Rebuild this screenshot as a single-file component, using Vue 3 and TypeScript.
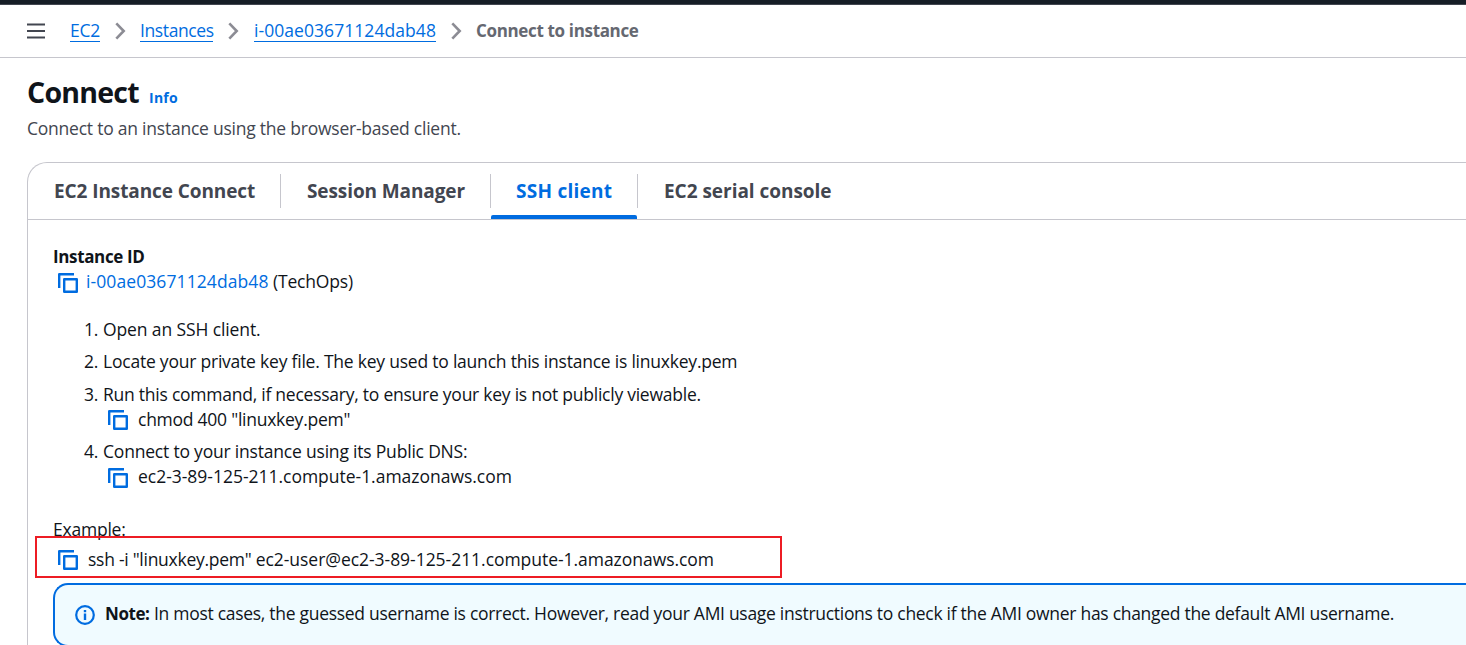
<script setup lang="ts">
import { h, type FunctionalComponent } from 'vue'

interface Tab {
  label: string
  key: string
  active?: boolean
}

const instanceId = 'i-00ae03671124dab48'
const dns = 'ec2-3-89-125-211.compute-1.amazonaws.com'

const tabs: Tab[] = [
  { label: 'EC2 Instance Connect', key: 'eic' },
  { label: 'Session Manager', key: 'ssm' },
  { label: 'SSH client', key: 'ssh', active: true },
  { label: 'EC2 serial console', key: 'serial' },
]

const stroke = (width: string) => ({ fill: 'none', stroke: 'currentColor', 'stroke-width': width })

const CopyIcon: FunctionalComponent = () =>
  h('svg', { width: 20, height: 20, viewBox: '0 0 20 20', ...stroke('2.4'), 'stroke-linejoin': 'round' }, [
    h('path', { d: 'M16 1.200H1.200V15' }),
    h('path', { d: 'M6.200 6.200h12.600v12.600H6.200z' }),
  ])

const Chevron: FunctionalComponent = () =>
  h('svg', { width: 12, height: 18, viewBox: '0 0 12 18', ...stroke('2.6') }, [
    h('path', { d: 'M1.300 1.400 8.700 9l-7.400 7.600' }),
  ])
</script>

<template>
  <div class="page">
    <div class="topbar"></div>
    <nav class="crumbs">
      <svg class="menu" width="18" height="16" viewBox="0 0 18 16">
        <path d="M0 1.500h18M0 8h18M0 14.500h18" fill="none" stroke="currentColor" stroke-width="2.200" />
      </svg>
      <a class="crumb c-ec2">EC2</a>
      <Chevron class="chev" />
      <a class="crumb c-inst">Instances</a>
      <Chevron class="chev" />
      <a class="crumb c-id">{{ instanceId }}</a>
      <Chevron class="chev" />
      <span class="current">Connect to instance</span>
    </nav>

    <header class="head">
      <div class="title-row">
        <h1>Connect</h1>
        <a class="info">Info</a>
      </div>
      <p class="sub">Connect to an instance using the browser-based client.</p>
    </header>

    <section class="panel">
      <div class="tabs">
        <div v-for="t in tabs" :key="t.key" class="tab" :class="[t.key, { active: t.active }]">
          <span>{{ t.label }}</span>
        </div>
      </div>

      <div class="body">
        <div class="label">Instance ID</div>
        <div class="line id-line">
          <CopyIcon class="copy" />
          <span><a class="id-link">{{ instanceId }}</a> <span class="name">(TechOps)</span></span>
        </div>

        <ol class="steps">
          <li><span class="num">1.</span><span class="s1">Open an SSH client.</span></li>
          <li><span class="num">2.</span><span class="s2">Locate your private key file. The key used to launch this instance is linuxkey.pem</span></li>
          <li><span class="num">3.</span><span class="s3">Run this command, if necessary, to ensure your key is not publicly viewable.</span></li>
          <li class="cmd"><CopyIcon class="copy" /><span class="chmod">chmod 400 "linuxkey.pem"</span></li>
          <li><span class="num">4.</span><span class="s4">Connect to your instance using its Public DNS:</span></li>
          <li class="cmd"><CopyIcon class="copy" /><span class="dns">{{ dns }}</span></li>
        </ol>

        <div class="example">Example:</div>
        <div class="line ssh-line">
          <CopyIcon class="copy" />
          <span><span class="ssh-key">ssh -i "linuxkey.pem" </span><span class="ssh-host">ec2-user@{{ dns }}</span></span>
          <div class="highlight"></div>
        </div>

        <div class="note">
          <svg class="note-icon" width="20" height="20" viewBox="0 0 20 20" fill="none" stroke="currentColor" stroke-width="2.200">
            <circle cx="10" cy="10" r="8.800" />
            <path d="M10 8.500V15M10 5v2.200" stroke-width="2.400" />
          </svg>
          <b>Note:</b>
          <span class="note-text">In most cases, the guessed username is correct. However, read your AMI usage instructions to check if the AMI owner has changed the default AMI username.</span>
        </div>
      </div>
    </section>
  </div>
</template>

<style>
html, body { overflow: hidden; background: #fff; }
</style>

<style scoped>
.page {
  width: 1466px;
  height: 645px;
  overflow: hidden;
  background: #fff;
  color: #0f141a;
  font: 17.500px/25px "Open Sans", "Noto Sans", sans-serif;
  white-space: nowrap;
}
.page * { box-sizing: border-box; }
svg { display: block; flex: none; }
a { color: #006ce0; }

.topbar { height: 5px; background: #161d26; border-bottom: 1px solid #424650; }
.crumbs {
  display: flex;
  align-items: center;
  height: 53px;
  padding: 0 0 0 27px;
  border-bottom: 1px solid #c6c6cd;
}
.menu { color: #424650; margin-right: 25px; }
.crumb { height: 22px; line-height: 21px; border-bottom: 1px solid #006ce0; }
.c-ec2 { width: 30px; letter-spacing: -0.25px; }
.c-inst { width: 73px; letter-spacing: -0.39px; }
.c-id { width: 182px; letter-spacing: 0.06px; }
.chev { color: #8c8c94; margin: 0 13px 0 15px; }
.c-inst + .chev { margin-right: 14px; }
.current { color: #656871; font-size: 17px; font-weight: 700; letter-spacing: -0.34px; line-height: 24px; }

.head { height: 104px; padding: 16px 0 0 27px; }
.title-row { display: flex; align-items: baseline; height: 36px; }
h1 { margin: 0; width: 122px; font-size: 28.500px; line-height: 36px; font-weight: 700; letter-spacing: -0.750px; }
.info { font-size: 14px; line-height: 20px; font-weight: 700; letter-spacing: 0.25px; }
.sub { margin: 6px 0 0; color: #424650; letter-spacing: -0.23px; }

.panel {
  margin-left: 27px;
  height: 520px;
  border: 1px solid #c6c6cd;
  border-right: 0;
  border-radius: 20px 0 0 0;
}
.tabs { display: flex; height: 57px; border-bottom: 1px solid #c6c6cd; }
.tab {
  position: relative;
  padding: 15px 0 0 26px;
  height: 56px;
  font-size: 19px;
  line-height: 26px;
  font-weight: 700;
  color: #424650;
}
.tab:not(:last-child)::after {
  content: "";
  position: absolute;
  right: 0;
  top: 11px;
  width: 1px;
  height: 34px;
  background: #c6c6cd;
}
.eic { width: 253px; letter-spacing: -0.09px; }
.ssm { width: 210px; letter-spacing: -0.1px; }
.ssh { width: 147px; padding-left: 25px; letter-spacing: 0.25px; }
.serial { letter-spacing: -0.03px; }
.active { color: #006ce0; }
.active::before {
  content: "";
  position: absolute;
  left: 0;
  right: 1px;
  bottom: 0;
  height: 4px;
  border-radius: 2px 2px 0 0;
  background: #006ce0;
}

.body { padding: 24px 0 0 25px; }
.label { font-size: 17px; font-weight: 700; letter-spacing: -0.36px; }
.line { display: flex; height: 25px; padding-left: 5px; }
.copy { color: #006ce0; margin-top: 3px; }
.id-line .copy { margin: 4px 8px 0 0; }
.id-link { letter-spacing: 0.09px; }
.name { letter-spacing: -0.2px; }

.steps { list-style: none; margin: 23px 0 0; padding: 0 0 0 31px; }
.steps li { display: flex; height: 25px; margin-bottom: 7px; }
.steps li:nth-child(2) { margin-bottom: 8px; }
.steps li:nth-child(3), .steps li:nth-child(5) { margin-bottom: 0; }
.num { width: 19px; letter-spacing: -0.2px; }
.steps .cmd { padding-left: 24px; }
.cmd .copy { margin-right: 10px; }
.steps .cmd:last-child .copy { margin-top: 4px; }
.s1 { letter-spacing: -0.115px; }
.s2 { letter-spacing: -0.22px; }
.s3 { letter-spacing: -0.245px; }
.chmod { letter-spacing: -0.25px; }
.s4 { letter-spacing: -0.2px; }
.dns { letter-spacing: -0.02px; }

.example { margin-top: 28px; height: 25px; letter-spacing: -0.22px; }
.ssh-line { position: relative; margin-top: 5px; }
.ssh-line .copy { margin-right: 10px; }
.ssh-key { letter-spacing: -0.27px; }
.ssh-host { letter-spacing: -0.04px; }
.highlight {
  position: absolute;
  left: -18px;
  top: -11px;
  width: 747px;
  height: 42px;
  border: 2px solid #ed1c24;
}

.note {
  display: flex;
  height: 64px;
  margin-top: 11px;
  padding: 16px 0 0 20px;
  background: #f0fbff;
  border: 2px solid #006ce0;
  border-right: 0;
  border-radius: 15px 0 0 15px;
}
.note-icon { color: #006ce0; margin: 4px 10px 0 0; }
.note b { width: 49px; font-size: 17px; letter-spacing: -0.42px; }
.note-text { letter-spacing: -0.291px; }
</style>
